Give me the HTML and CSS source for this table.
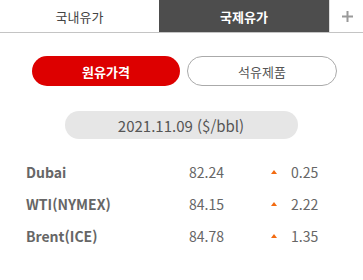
FILE: index.html
```html
<!DOCTYPE html>
<html lang="ko">
<head>
<meta charset="utf-8">
<link rel="stylesheet" href="styles.css">
</head>
<body>
<div class="widget">
  <div class="tabs">
    <div class="tab">국내유가</div>
    <div class="tab active">국제유가</div>
    <div class="tab-plus">
      <svg width="11" height="11" viewBox="0 0 11 11"><path d="M5.5 0v11M0 5.5h11" stroke="#9a9a9a" stroke-width="2"/></svg>
    </div>
  </div>
  <div class="toggles">
    <div class="btn btn-on">원유가격</div>
    <div class="btn btn-off">석유제품</div>
  </div>
  <div class="date-wrap"><div class="date">2021.11.09 ($/bbl)</div></div>
  <div class="rows">
    <div class="row"><span class="name">Dubai</span><span class="val">82.24</span><span class="up"></span><span class="chg">0.25</span></div>
    <div class="row"><span class="name">WTI(NYMEX)</span><span class="val">84.15</span><span class="up"></span><span class="chg">2.22</span></div>
    <div class="row"><span class="name">Brent(ICE)</span><span class="val">84.78</span><span class="up"></span><span class="chg">1.35</span></div>
  </div>
</div>
</body>
</html>
```
FILE: styles.css
```css
html, body { margin: 0; padding: 0; background: #fff; }
body { font-family: "Noto Sans CJK KR", "Noto Sans", sans-serif; color: #555; }
.widget { width: 363px; }
.tabs { display: flex; height: 32px; border-bottom: 1px solid #c4c4c4; }
.tab { width: 159px; display: flex; align-items: center; justify-content: center; font-size: 13px; color: #444; }
.tab.active { width: 170px; background: #4d4d4d; color: #fff; font-weight: bold; border-right: 1px solid #ddd; }
.tab-plus { flex: 1; display: flex; align-items: center; justify-content: center; padding-left: 1px; }
.toggles { display: flex; gap: 7px; padding: 23px 0 0 32px; }
.btn { height: 30px; box-sizing: border-box; border-radius: 15px; display: flex; align-items: center; justify-content: center; font-size: 13px; }
.btn-on { width: 148px; background: #dd0000; color: #fff; font-weight: bold; }
.btn-off { width: 150px; border: 1px solid #aaa; color: #555; }
.date-wrap { display: flex; justify-content: center; padding-top: 25px; padding-right: 1px; }
.date { width: 233px; height: 28px; border-radius: 14px; background: #e6e6e6; display: flex; align-items: center; justify-content: center; font-size: 15px; color: #555; }
.rows { padding: 17px 0 0 26px; }
.row { display: flex; align-items: center; height: 32px; font-size: 14px; }
.name { width: 163px; font-weight: bold; color: #666; }
.val { width: 82px; color: #666; }
.up { width: 0; height: 0; border-left: 3px solid transparent; border-right: 3px solid transparent; border-bottom: 4px solid #f26a10; margin-right: 14px; }
.chg { color: #666; }
```
